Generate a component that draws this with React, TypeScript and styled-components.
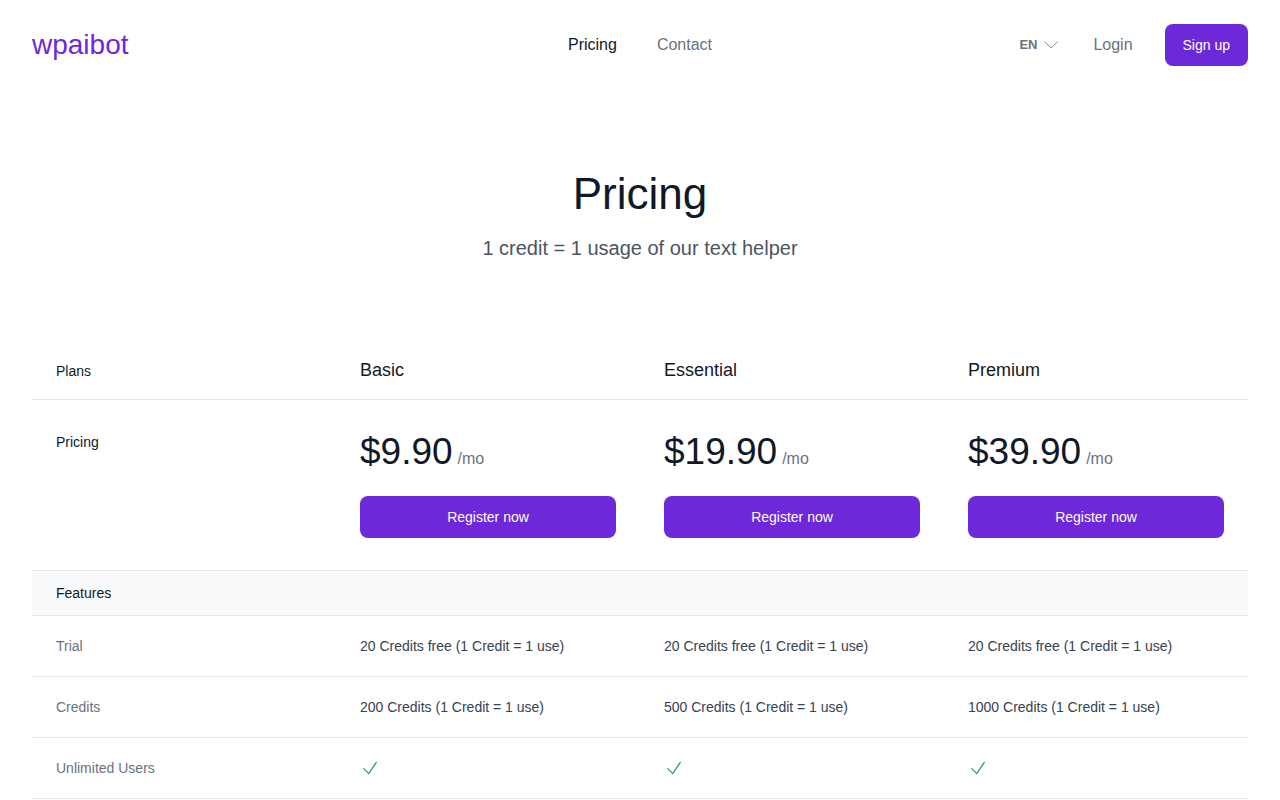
import React from "react";
import styled, { createGlobalStyle } from "styled-components";

const GlobalStyle = createGlobalStyle`
  *, *::before, *::after { box-sizing: border-box; }
  body {
    margin: 0;
    background: #ffffff;
    color: #111827;
    font-family: "Liberation Sans", Arial, sans-serif;
    font-size: 14px;
    line-height: 20px;
  }
`;

const Header = styled.header`
  display: flex;
  align-items: center;
  padding: 24px 32px;
`;

const HeaderSide = styled.div<{ $end?: boolean }>`
  flex: 1;
  display: flex;
  align-items: center;
  justify-content: ${(p) => (p.$end ? "flex-end" : "flex-start")};
  gap: 32px;
`;

const Logo = styled.a`
  color: #6d28d9;
  font-size: 28px;
  line-height: 36px;
  text-decoration: none;
`;

const Nav = styled.nav`
  display: flex;
  gap: 40px;
`;

const NavLink = styled.a<{ $active?: boolean }>`
  color: ${(p) => (p.$active ? "#111827" : "#6b7280")};
  font-size: 16px;
  line-height: 24px;
  text-decoration: none;
`;

const LanguagePicker = styled.label`
  display: grid;
  align-items: center;
  justify-items: end;
  color: #6b7280;

  > * {
    grid-area: 1 / 1;
  }

  svg {
    pointer-events: none;
  }
`;

const LanguageSelect = styled.select`
  appearance: none;
  width: 42px;
  padding: 0;
  border: 0;
  background: transparent;
  color: inherit;
  font-family: inherit;
  font-size: 13px;
  font-weight: 700;
  line-height: 20px;
  cursor: pointer;
`;

const Button = styled.button<{ $block?: boolean }>`
  display: block;
  width: ${(p) => (p.$block ? "100%" : "auto")};
  padding: 11px 18px;
  border: 0;
  border-radius: 8px;
  background: #6d28d9;
  color: #ffffff;
  font-family: inherit;
  font-size: 14px;
  line-height: 20px;
  cursor: pointer;
`;

const Intro = styled.section`
  padding: 80px 32px 64px;
  text-align: center;
`;

const Title = styled.h1`
  margin: 0;
  font-size: 44px;
  font-weight: 400;
  line-height: 48px;
`;

const Subtitle = styled.p`
  margin: 16px 0 0;
  color: #4b5563;
  font-size: 20px;
  line-height: 28px;
`;

const Plans = styled.section`
  padding: 0 32px;
`;

const PlanTable = styled.table`
  width: 100%;
  table-layout: fixed;
  border-spacing: 0;
  border-bottom: 1px solid #e5e7eb;
  text-align: left;

  th {
    font-weight: 400;
  }
`;

const HeadLabel = styled.th`
  padding: 32px 24px 16px;
  line-height: 24px;
`;

const PlanName = styled(HeadLabel)`
  font-size: 18px;
  line-height: 25px;
`;

const PriceLabel = styled.th`
  padding: 32px 24px;
  border-top: 1px solid #e5e7eb;
  vertical-align: top;
`;

const PriceCell = styled.td`
  padding: 32px 24px;
  border-top: 1px solid #e5e7eb;
`;

const PriceLine = styled.p`
  display: flex;
  align-items: baseline;
  gap: 5px;
  margin: 0 0 24px;
  height: 40px;
`;

const Amount = styled.span`
  font-size: 37px;
  line-height: 40px;
`;

const Period = styled.span`
  color: #6b7280;
  font-size: 16px;
  line-height: 24px;
`;

const GroupHead = styled.th`
  padding: 12px 24px;
  border-top: 1px solid #e5e7eb;
  background: #f9fafb;
`;

const FeatureName = styled.th`
  padding: 20px 24px;
  border-top: 1px solid #e5e7eb;
  color: #6b7280;
`;

const FeatureCell = styled.td`
  padding: 20px 24px;
  border-top: 1px solid #e5e7eb;
  color: #374151;
`;

const Icon = styled.svg`
  display: block;
  width: 20px;
  height: 20px;
  fill: none;
  stroke: currentColor;
`;

const CheckIcon = styled(Icon)`
  color: #10a573;
`;

const plans = [
  { name: "Basic", price: "$9.90", credits: "200" },
  { name: "Essential", price: "$19.90", credits: "500" },
  { name: "Premium", price: "$39.90", credits: "1000" },
];

function Check() {
  return (
    <CheckIcon viewBox="0 0 24 24" strokeWidth="1.5" role="img" aria-label="Included">
      <path d="M4.5 12.75l6 6 9-13.5" strokeLinecap="round" strokeLinejoin="round" />
    </CheckIcon>
  );
}

export default function App() {
  return (
    <>
      <GlobalStyle />
      <Header>
        <HeaderSide>
          <Logo href="#">wpaibot</Logo>
        </HeaderSide>
        <Nav>
          <NavLink href="#pricing" $active aria-current="page">Pricing</NavLink>
          <NavLink href="#contact">Contact</NavLink>
        </Nav>
        <HeaderSide $end>
          <LanguagePicker>
            <LanguageSelect aria-label="Language" defaultValue="en">
              <option value="en">EN</option>
            </LanguageSelect>
            <Icon viewBox="0 0 24 24" strokeWidth="1" aria-hidden="true">
              <path d="M19.5 8.25l-7.5 7.5-7.5-7.5" strokeLinecap="round" strokeLinejoin="round" />
            </Icon>
          </LanguagePicker>
          <NavLink href="#login">Login</NavLink>
          <Button type="button">Sign up</Button>
        </HeaderSide>
      </Header>
      <main>
        <Intro>
          <Title>Pricing</Title>
          <Subtitle>1 credit = 1 usage of our text helper</Subtitle>
        </Intro>
        <Plans>
          <PlanTable>
            <thead>
              <tr>
                <HeadLabel scope="col">Plans</HeadLabel>
                {plans.map((plan) => (
                  <PlanName key={plan.name} scope="col">{plan.name}</PlanName>
                ))}
              </tr>
            </thead>
            <tbody>
              <tr>
                <PriceLabel scope="row">Pricing</PriceLabel>
                {plans.map((plan) => (
                  <PriceCell key={plan.name}>
                    <PriceLine>
                      <Amount>{plan.price}</Amount>
                      <Period>/mo</Period>
                    </PriceLine>
                    <Button type="button" $block>Register now</Button>
                  </PriceCell>
                ))}
              </tr>
              <tr>
                <GroupHead colSpan={4} scope="colgroup">Features</GroupHead>
              </tr>
              <tr>
                <FeatureName scope="row">Trial</FeatureName>
                {plans.map((plan) => (
                  <FeatureCell key={plan.name}>20 Credits free (1 Credit = 1 use)</FeatureCell>
                ))}
              </tr>
              <tr>
                <FeatureName scope="row">Credits</FeatureName>
                {plans.map((plan) => (
                  <FeatureCell key={plan.name}>{`${plan.credits} Credits (1 Credit = 1 use)`}</FeatureCell>
                ))}
              </tr>
              <tr>
                <FeatureName scope="row">Unlimited Users</FeatureName>
                {plans.map((plan) => (
                  <FeatureCell key={plan.name}><Check /></FeatureCell>
                ))}
              </tr>
            </tbody>
          </PlanTable>
        </Plans>
      </main>
    </>
  );
}
